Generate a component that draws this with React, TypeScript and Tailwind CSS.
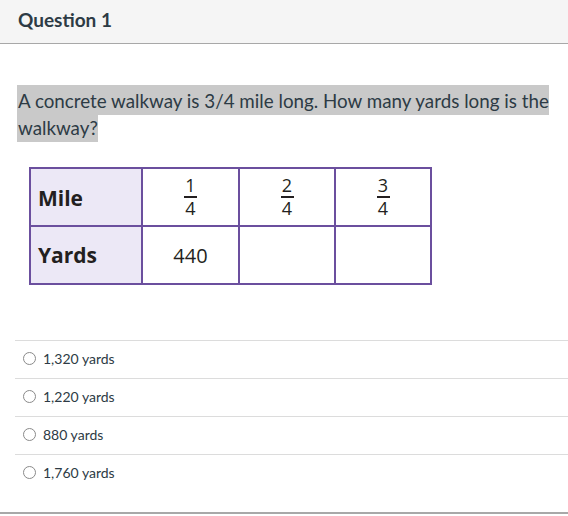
import React from "react";

function Frac({ n }: { n: string }) {
  return (
    <div className="flex flex-col items-center text-[18px] text-[#231f20]">
      <span className="leading-[16px] h-[17px]">{n}</span>
      <span className="w-[13px] h-[1.5px] bg-[#231f20] my-[2px]"></span>
      <span className="leading-[16px] h-[17px]">4</span>
    </div>
  );
}

function Answer({ label }: { label: string }) {
  return (
    <div className="h-[38px] border-t border-[#dcdcdc] flex items-center pl-[8px] pb-[3px]">
      <span className="w-[13px] h-[13px] rounded-full border border-[#8a8a8a] bg-white"></span>
      <span className="ml-[7px] text-[14px] text-[#2d3b45]">{label}</span>
    </div>
  );
}

export default function App() {
  return (
    <div className="w-[568px] h-[516px] bg-white overflow-hidden" style={{ fontFamily: "Lato, 'Open Sans', sans-serif" }}>
      <div className="h-[44px] bg-[#f5f5f5] border-b border-[#a8a8a8] flex items-center pl-[18px] pb-[3px]">
        <span className="text-[19px] font-bold text-[#2d3b45]">Question 1</span>
      </div>
      <div className="pl-[17px] pr-[10px] pt-[42px]">
        <p className="text-[18.8px] leading-[27.5px] text-[#2d3b45]">
          <span className="bg-[#c9c9c9] py-[3.5px] pl-[1px]" style={{ boxDecorationBreak: "clone", WebkitBoxDecorationBreak: "clone" }}>
            A concrete walkway is 3/4 mile long. How many yards long is the walkway?
          </span>
        </p>
      </div>
      <div className="pl-[29px] pt-[26px]">
        <div
          className="inline-grid grid-cols-[110px_95px_94px_94px] grid-rows-[56px_56px] border-2 border-[#6b4f9e] bg-[#6b4f9e] gap-[2px]"
          style={{ fontFamily: "'Open Sans', Lato, sans-serif" }}
        >
          <div className="bg-[#ece8f6] flex items-center pl-[7px] pt-[3px] text-[21px] font-bold text-[#231f20]">Mile</div>
          <div className="bg-white flex items-center justify-center"><Frac n="1" /></div>
          <div className="bg-white flex items-center justify-center"><Frac n="2" /></div>
          <div className="bg-white flex items-center justify-center"><Frac n="3" /></div>
          <div className="bg-[#ece8f6] flex items-center pl-[7px] pt-[2px] text-[21px] font-bold text-[#231f20]">Yards</div>
          <div className="bg-white flex items-center justify-center pt-[2px] text-[20px] text-[#231f20]">440</div>
          <div className="bg-white"></div>
          <div className="bg-white"></div>
        </div>
      </div>
      <div className="pl-[15px] pt-[55px]">
        <Answer label="1,320 yards" />
        <Answer label="1,220 yards" />
        <Answer label="880 yards" />
        <Answer label="1,760 yards" />
      </div>
      <div className="mt-[20px] border-t-2 border-[#a8a8a8]"></div>
    </div>
  );
}
